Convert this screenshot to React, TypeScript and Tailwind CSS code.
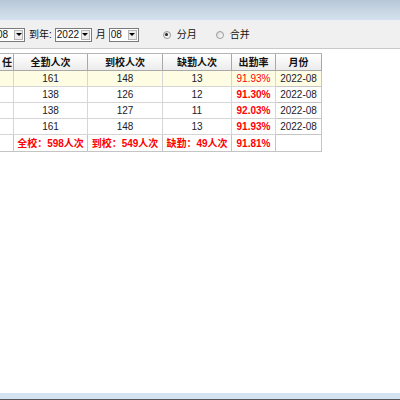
import React from "react";

const cols = "grid grid-cols-[14px_74px_75px_69px_44px_46px] w-[322px]";

function Combo({ value, width }: { value: string; width: string }) {
  return (
    <div className={`flex h-[14px] items-stretch border border-[#7a7a7a] bg-white ${width}`}>
      <div className="flex flex-1 items-center overflow-hidden pl-[1px] leading-none text-[#111]">{value}</div>
      <div className="m-[1px] flex w-[9px] items-center justify-center border border-[#b5b5b5] bg-[#ececec]">
        <div className="h-0 w-0 border-x-[3px] border-t-[3px] border-x-transparent border-t-black" />
      </div>
    </div>
  );
}

function Radio({ checked, label }: { checked?: boolean; label: string }) {
  return (
    <div className="flex items-center gap-[6px]">
      <div className="flex h-[8px] w-[8px] items-center justify-center rounded-full border border-[#9a9a9a] bg-gradient-to-br from-[#d8d8d8] to-white">
        {checked && <div className="h-[3px] w-[3px] rounded-full bg-[#222]" />}
      </div>
      <span className="text-[#111]">{label}</span>
    </div>
  );
}

const rows = [
  { a: "161", b: "148", c: "13", r: "91.93%", m: "2022-08", sel: true },
  { a: "138", b: "126", c: "12", r: "91.30%", m: "2022-08" },
  { a: "138", b: "127", c: "11", r: "92.03%", m: "2022-08" },
  { a: "161", b: "148", c: "13", r: "91.93%", m: "2022-08" },
];

const headers = ["任", "全勤人次", "到校人次", "缺勤人次", "出勤率", "月份"];

export default function App() {
  return (
    <div className="flex h-[400px] w-[400px] flex-col overflow-hidden bg-white font-['Liberation_Sans','Noto_Sans_CJK_SC',sans-serif] text-[10px]">
      <div className="h-[20px] bg-gradient-to-b from-[#b7c7d8] to-[#d5e1ee]" />
      <div className="h-px bg-[#eaf0f7]" />
      <div className="flex h-[27px] items-center bg-[#f0f0f0]">
        <div className="ml-[-5px]">
          <Combo value="08" width="w-[30px]" />
        </div>
        <span className="ml-[4px] text-[#111]">到年:</span>
        <div className="ml-[3px]">
          <Combo value="2022" width="w-[37px]" />
        </div>
        <span className="ml-[4px] text-[#111]">月</span>
        <div className="ml-[3px]">
          <Combo value="08" width="w-[30px]" />
        </div>
        <div className="ml-[24px]">
          <Radio checked label="分月" />
        </div>
        <div className="ml-[19px]">
          <Radio label="合并" />
        </div>
      </div>
      <div className="h-px bg-[#c9c9c9]" />
      <div className="flex-1 pt-[4px]">
        <div className={`${cols} border-t border-[#b4b4b4]`}>
          {headers.map((h, i) => (
            <div
              key={h}
              className={`flex h-[17px] items-center overflow-hidden whitespace-nowrap border-b border-r border-[#a8a8a8] bg-gradient-to-b from-white to-[#ececec] font-bold text-[#111] ${
                i === 0 ? "justify-end pr-[1px]" : "justify-center"
              }`}
            >
              {h}
            </div>
          ))}
        </div>
        {rows.map((row, idx) => (
          <div key={idx} className={`${cols} ${row.sel ? "bg-[#fefde3]" : "bg-white"}`}>
            <div className="h-[16px] border-b border-r border-[#d6d6d6]" />
            <div className="flex h-[16px] items-center justify-center border-b border-r border-[#d6d6d6] text-[#1a1a2a]">{row.a}</div>
            <div className="flex h-[16px] items-center justify-center border-b border-r border-[#d6d6d6] text-[#1a1a2a]">{row.b}</div>
            <div className="flex h-[16px] items-center justify-center border-b border-r border-[#d6d6d6] text-[#1a1a2a]">{row.c}</div>
            <div
              className={`flex h-[16px] items-center justify-center border-b border-r border-[#d6d6d6] text-[#ff0000] ${
                row.sel ? "" : "font-bold"
              }`}
            >
              {row.r}
            </div>
            <div className="flex h-[16px] items-center justify-center border-b border-r border-[#c4c4c4] text-[#1a1a2a]">{row.m}</div>
          </div>
        ))}
        <div className={`${cols} bg-white font-bold text-[#ff0000]`}>
          <div className="h-[17px] border-b border-r border-[#c4c4c4]" />
          <div className="flex h-[17px] items-center justify-center whitespace-nowrap border-b border-r border-[#c4c4c4]">全校：598人次</div>
          <div className="flex h-[17px] items-center justify-center whitespace-nowrap border-b border-r border-[#c4c4c4]">到校：549人次</div>
          <div className="flex h-[17px] items-center justify-center whitespace-nowrap border-b border-r border-[#c4c4c4]">缺勤：49人次</div>
          <div className="flex h-[17px] items-center justify-center border-b border-r border-[#c4c4c4]">91.81%</div>
          <div className="h-[17px] border-b border-r border-[#c4c4c4]" />
        </div>
      </div>
      <div className="h-[6px] bg-[#d5e2f1]" />
      <div className="h-px bg-[#555]" />
    </div>
  );
}
